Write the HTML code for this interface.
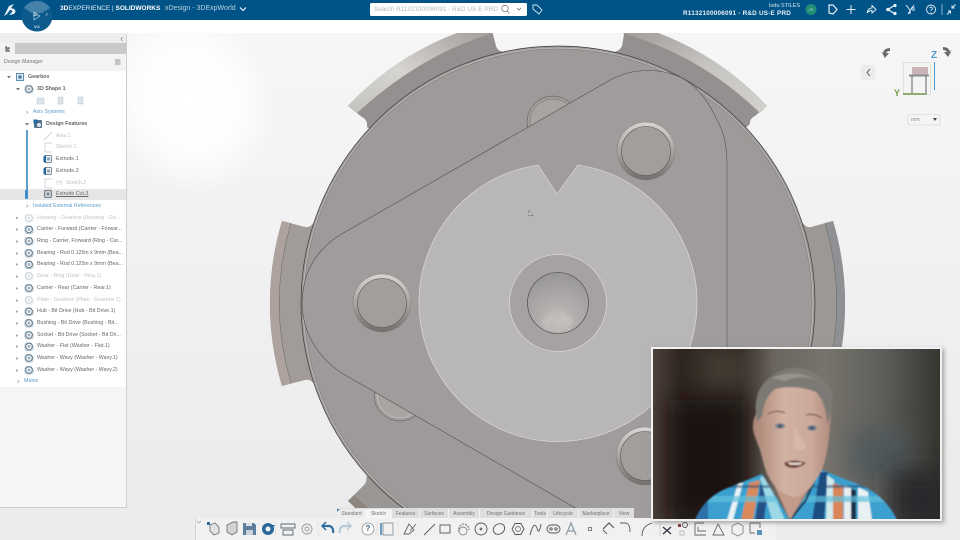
<!DOCTYPE html>
<html><head><meta charset="utf-8"><style>
html{background:#ececec}
html,body{margin:0;padding:0;width:960px;height:540px;overflow:hidden}
body{position:relative;font-family:"Liberation Sans",sans-serif;filter:blur(.3px)}
.a{position:absolute}
.t{position:absolute;white-space:nowrap;font-size:5.3px;line-height:8px;color:#62676b}
.d{color:#c2c2c2}.l{color:#5b9bc9}.b{font-weight:bold;color:#666}
.tb{position:absolute;top:509px;height:9px;font-size:5px;line-height:10px;text-align:center;color:#707070;background:#dedede;border-left:1px solid #f2f2f2}
svg{position:absolute;left:0;top:0;overflow:visible}
</style></head><body>

<div class="a" style="left:0;top:20px;width:960px;height:13px;background:#fff"></div>

<!-- viewport / gear -->
<svg width="960" height="540" viewBox="0 0 960 540">
<defs>
<radialGradient id="glow" cx="0.5" cy="0.5" r="0.5"><stop offset="0" stop-color="#fff"/><stop offset=".6" stop-color="#fff" stop-opacity=".8"/><stop offset="1" stop-color="#fff" stop-opacity="0"/></radialGradient>
<linearGradient id="strip" x1="0" y1="1" x2="1" y2="0"><stop offset="0" stop-color="#c4c2be"/><stop offset=".45" stop-color="#d6d4d0"/><stop offset="1" stop-color="#a39f9c"/></linearGradient>
<linearGradient id="strip2" x1="0" y1="0" x2="1" y2="1"><stop offset="0" stop-color="#a19d9a"/><stop offset=".5" stop-color="#c6c4c1"/><stop offset="1" stop-color="#d2d1ce"/></linearGradient>
<linearGradient id="ring" x1="0" y1="0" x2="0" y2="1"><stop offset="0" stop-color="#d8d6d4"/><stop offset=".5" stop-color="#a8a4a2"/><stop offset="1" stop-color="#726f6e"/></linearGradient>
<radialGradient id="hole" cx=".5" cy=".8" r=".8"><stop offset="0" stop-color="#c5c2c0"/><stop offset=".35" stop-color="#b3afae"/><stop offset="1" stop-color="#989696"/></radialGradient>
<linearGradient id="vg" x1="0" y1="0" x2="0" y2="1"><stop offset="0" stop-color="#f6f6f6"/><stop offset="1" stop-color="#ebebeb"/></linearGradient>
<filter id="sb" x="-50%" y="-50%" width="200%" height="200%"><feGaussianBlur stdDeviation="1.500"/></filter>
<clipPath id="vp"><rect x="127" y="33" width="833" height="485"/></clipPath>
</defs>
<rect x="127" y="33" width="833" height="485" fill="url(#vg)"/>
<ellipse cx="190" cy="100" rx="85" ry="95" fill="url(#glow)" transform="rotate(-30 190 100)"/>
<g clip-path="url(#vp)">
 <!-- tabs -->
 <path d="M348 106A288 288 0 0 1 490 23L496 46Q498 52 505 52L560 60L400 150L367 127Q368 120 362 117Z" fill="#949090"/>
 <path d="M348 106A288 288 0 0 1 457 33L493 33Q420 55 357 113Z" fill="url(#strip)"/>
 <path d="M626 23L622 46Q619 52 612 52L560 60L720 150L750 124Q749 119 755 116L767 106A288 288 0 0 0 626 23Z" fill="#949090"/>
 <path d="M658 33L622 33Q700 55 760 113L767 106A288 288 0 0 0 658 33Z" fill="url(#strip2)"/>
 <path d="M282 221A288 288 0 0 0 282 386L305 380Q310 379 313 383L340 303L313 223Q310 228 305 227Z" fill="#a19c99"/>
 <path d="M282 221A288 288 0 0 0 282 386L291 383A278 278 0 0 1 291 223Z" fill="#ada29e"/>
 <path d="M291 223A278 278 0 0 0 291 383" fill="none" stroke="#555" stroke-width=".4"/>
 <path d="M833 221A288 288 0 0 1 833 386L811 380Q806 379 803 383L780 303L803 223Q806 228 811 227Z" fill="#9c9896"/>
 <path d="M833 221A288 288 0 0 1 833 386L825 383A278 278 0 0 0 825 223Z" fill="#8e9093"/>
 <path d="M825 223A278 278 0 0 1 825 383" fill="none" stroke="#555" stroke-width=".4"/>
 <path d="M348 501L362 487Q368 482 366 476L420 500V530H385Z" fill="#9a9693"/>
 <path d="M348 501L354 495L392 530H378Z" fill="#8d8580"/>
 <!-- main disc -->
 <circle cx="558" cy="303" r="257" fill="#9c9897" stroke="#3e3d3d" stroke-width=".7"/>
 <circle cx="558" cy="303" r="255" fill="none" stroke="#d4d2d0" stroke-width=".5"/>
 <circle cx="558" cy="303" r="254" fill="#9e9a99" stroke="#6a6969" stroke-width=".3"/>
 <!-- partial holes -->
 <circle cx="553" cy="122" r="26" fill="#a09c9b" stroke="#555" stroke-width=".5"/>
 <circle cx="553" cy="122" r="23" fill="#a8a4a2" stroke="#666" stroke-width=".4"/>
 <circle cx="400" cy="395" r="26" fill="#a09c9b" stroke="#555" stroke-width=".5"/>
 <circle cx="400" cy="395" r="23" fill="#a8a4a2" stroke="#ddd" stroke-width=".5"/>
 <!-- plate -->
 <path d="M340 235L612 79Q643 64 675 75Q700 84 716 118Q727 136 727 165L727 540L610 528L340 372Q303 345 302 303Q303 258 340 235Z" fill="#a09c9b" stroke="#4c4b4e" stroke-width=".55"/>
 <!-- bolts -->
 <circle cx="646" cy="151" r="29" fill="url(#ring)" stroke="#777" stroke-width=".4"/><circle cx="646" cy="151" r="24.5" fill="#a29e9c" stroke="#555" stroke-width=".6"/>
 <circle cx="382" cy="303" r="29" fill="url(#ring)" stroke="#777" stroke-width=".4"/><circle cx="382" cy="303" r="24.5" fill="#a29e9c" stroke="#555" stroke-width=".6"/>
 <circle cx="645" cy="456" r="29" fill="url(#ring)" stroke="#777" stroke-width=".4"/><circle cx="645" cy="456" r="24.5" fill="#a29e9c" stroke="#555" stroke-width=".6"/>
 <!-- light disc with notch -->
 <path d="M538 165L557 194L578 165A139 139 0 1 1 538 165Z" fill="#b8b6b6" stroke="#e2e1e1" stroke-width=".6"/>
 <circle cx="558" cy="303" r="48.5" fill="#a6a2a1" stroke="#e2e1e1" stroke-width=".6"/>
 <circle cx="558" cy="303" r="30.5" fill="url(#hole)" stroke="#3f3e3e" stroke-width=".6"/>
 <path d="M547 329L555 312L541 322Z M567 329L560 312L574 320Z" fill="#c8c5c3" opacity=".65" filter="url(#sb)"/>
 <!-- cursor -->
 <path d="M529 210L529 216L531 215L533 216Z" fill="#ddd" stroke="#555" stroke-width=".5"/>
</g>
</svg>

<!-- top bar -->
<div class="a" style="left:0;top:0;width:960px;height:20px;background:#005386"></div>
<svg width="960" height="40" viewBox="0 0 960 40">
 <path d="M4 16L9 6L14 4L11 8L14 9Q17 11 14 14L9 15L12 12Q13 10 10 10L7 14Z" fill="#e8eff5"/>
 <circle cx="37" cy="16" r="15.500" fill="#0d5a8c"/>
 <path d="M24 8A15.500 15.500 0 0 1 50 8L42 13H32Z" fill="#5f91b6" opacity=".7"/>
 <path d="M34 12L40 16L34 20Z" fill="none" stroke="#b9d3e6" stroke-width=".7"/>
 <!-- search -->
 <rect x="370" y="3" width="157" height="13" rx="1.500" fill="#fff"/>
 <circle cx="505" cy="8.500" r="3.200" fill="none" stroke="#777" stroke-width=".8"/><path d="M507.300 11L509.500 13.500" stroke="#777" stroke-width=".8"/>
 <path d="M517 8L519 10L521 8" fill="none" stroke="#666" stroke-width=".8"/>
 <path d="M533 5L537 5L542 10L539 14L533 9Z" fill="none" stroke="#d5e5f0" stroke-width=".9"/>
 <!-- user -->
 <circle cx="811" cy="9.500" r="5.500" fill="#1f8f76"/>
 <path d="M829 5L833 5L837 9.500L833 14L829 13Z" fill="none" stroke="#e9f1f6" stroke-width="1.200"/>
 <path d="M851 5V14M846.500 9.500H855.500" stroke="#e9f1f6" stroke-width="1"/>
 <path d="M867 13Q868 8 872 8V5.500L876 9.500L872 13V10.500Q869 10.500 867 13Z" fill="none" stroke="#e9f1f6" stroke-width=".9"/>
 <path d="M895 5L888 9.500L895 14" fill="none" stroke="#e9f1f6" stroke-width="1.200"/><circle cx="888" cy="9.500" r="1.800" fill="#e9f1f6"/><circle cx="895" cy="5.500" r="1.600" fill="#e9f1f6"/><circle cx="895" cy="13.500" r="1.600" fill="#e9f1f6"/>
 <path d="M906 5L910 10V14M914 5L908 14M912 10H915M911 8H915" fill="none" stroke="#e9f1f6" stroke-width="1"/>
 <circle cx="931" cy="9.500" r="4.500" fill="none" stroke="#e9f1f6" stroke-width=".9"/><path d="M929.500 8Q931 6 932.500 8Q932.500 9.500 931 10V11M931 12V12.700" fill="none" stroke="#e9f1f6" stroke-width=".8"/>
 <path d="M942 4V15" stroke="#c5d8e5" stroke-width=".7"/>
 <path d="M947 14.500L950.500 11M950.500 13.500V11H948M955.500 4.500L952 8M952 5.500V8H954.500" fill="none" stroke="#e9f1f6" stroke-width="1"/>
 <path d="M240 7.500L243 10.500L246 7.500" fill="none" stroke="#fff" stroke-width="1"/>
</svg>
<div class="t" style="left:33px;top:13px;font-size:3.500px;color:#d5e3ee;font-weight:bold;line-height:5px">3D</div>
<div class="t" style="left:46px;top:13px;font-size:3.500px;color:#d5e3ee;line-height:5px">F</div>
<div class="t" style="left:34px;top:24px;font-size:4px;color:#dce8f1;font-weight:bold;line-height:5px">V.6</div>
<div class="t" style="left:60px;top:4px;font-size:6.500px;line-height:10px;color:#e3edf4"><b style="color:#fff">3D</b>EXPERIENCE | <b style="color:#fff">SOLIDWORKS</b></div>
<div class="t" style="left:165px;top:4px;font-size:7px;line-height:10px;color:#b9d2e3">xDesign - 3DExpWorld</div>
<div class="t" style="left:374px;top:5px;font-size:6.400px;line-height:9px;color:#b3b8bc">Search R1132100006091 - R&amp;D US-E PRD</div>
<div class="t" style="right:160px;top:2px;font-size:5.500px;line-height:8px;color:#dfe9f1">Iodu STILES</div>
<div class="t" style="left:683px;top:9px;font-size:6.300px;line-height:9px;color:#e8f0f5;font-weight:bold;letter-spacing:.25px">R1132100006091 - R&amp;D US-E PRD</div>
<div class="t" style="left:808.500px;top:6px;font-size:4px;line-height:7px;color:#bfe0d6">JS</div>

<!-- side panel -->
<div class="a" style="left:0;top:34px;width:126px;height:473px;background:#f5f5f5;border-right:1px solid #cfcfcf;border-bottom:1px solid #cfcfcf"></div>
<div class="a" style="left:0;top:34px;width:126px;height:9px;background:#eeeeee"></div>
<div class="a" style="left:0;top:43px;width:126px;height:11px;background:#c9c9c9"></div>
<div class="a" style="left:0;top:43px;width:15px;height:11px;background:#f2f2f2"></div>
<div class="a" style="left:0;top:54px;width:126px;height:17px;background:#f3f3f3"></div>
<div class="a" style="left:0;top:71px;width:126px;height:316px;background:#fff"></div>
<div class="a" style="left:0;top:189px;width:126px;height:11px;background:#e6e6e6"></div>
<div class="a" style="left:26px;top:130px;width:1.500px;height:64px;background:#5f9fce"></div>
<div class="a" style="left:25px;top:190px;width:3px;height:9px;background:#3e8fcb;border-radius:1px"></div>

<svg width="130" height="400" viewBox="0 0 130 400">
<defs>
<g id="p"><circle r="3.300" fill="none" stroke="#557489" stroke-width="1"/><circle r="1.500" fill="#9fb1bf"/><path d="M-3-3.500H2L4-1V3L2 4H-3L-4 2V-2Z" fill="none" stroke="#6d8a9f" stroke-width=".5"/></g>
<g id="pd" opacity=".32"><use href="#p"/></g>
<g id="ex"><rect x="-3.500" y="-3.500" width="7" height="7" rx="1" fill="#eef2f5" stroke="#53687a" stroke-width=".7"/><path d="M-4.500-2.500V3L-2 4V-3.500Z" fill="#20669e"/><rect x="-1" y="-1.500" width="3" height="3" fill="#8ba2b4"/></g>
</defs>
<path d="M122.500 37L121 39L122.500 41" fill="none" stroke="#8a8a8a" stroke-width=".7"/>
<path d="M6 46V51H10M6 48H10M8 51V48" fill="none" stroke="#444" stroke-width="1"/>
<path d="M115 60H120.500M115 62H120.500M115 64H120.500" stroke="#777" stroke-width=".8"/>
<g fill="#777"><path d="M7 76H11L9 78.500Z"/><path d="M16 88H20L18 90.500Z"/><path d="M25 123H29L27 125.500Z"/></g>
<g fill="none" stroke="#7da3c2" stroke-width=".6"><path d="M26.500 111L28 112.500L26.500 114"/><path d="M26.500 204.500L28 206L26.500 207.500"/><path d="M17.500 380L19 381.500L17.500 383"/></g>
<g fill="#aaa"><path d="M16 216.500L18.500 218L16 219.500Z"/><path d="M16 228L18.500 229.500L16 231Z"/><path d="M16 240L18.500 241.500L16 243Z"/><path d="M16 252L18.500 253.500L16 255Z"/><path d="M16 263L18.500 264.500L16 266Z"/><path d="M16 275L18.500 276.500L16 278Z"/><path d="M16 287L18.500 288.500L16 290Z"/><path d="M16 299L18.500 300.500L16 302Z"/><path d="M16 310L18.500 311.500L16 313Z"/><path d="M16 322L18.500 323.500L16 325Z"/><path d="M16 334L18.500 335.500L16 337Z"/><path d="M16 345L18.500 346.500L16 348Z"/><path d="M16 357L18.500 358.500L16 360Z"/><path d="M16 369L18.500 370.500L16 372Z"/></g>
<g fill="#dbe4ea" stroke="#2a6c9c" stroke-width=".7" transform="translate(20 77)"><path d="M-3.500-3.500H3.500V3.500H-3.500Z"/><circle r="1.300" fill="#4b82aa"/></g>
<use href="#p" x="29" y="89"/>
<g fill="#dde3e8" stroke="#bcc8d1" stroke-width=".5"><rect x="37" y="98" width="7" height="6"/><path d="M58 97H63V104H58Z"/><path d="M78 97H83V104H78Z"/></g>
<g transform="translate(38 124)"><rect x="-4" y="-4" width="8" height="8" rx="1" fill="#55708a"/><rect x="-4.500" y="-4.500" width="4" height="4" fill="#1e6aa3"/><circle cx="1" cy="1" r="2" fill="#dde4ea"/></g>
<path d="M44 140L52 132" stroke="#c4c4c4" stroke-width=".8"/>
<path d="M52 143H45V152H52" fill="none" stroke="#bfc8d0" stroke-width=".7"/>
<use href="#ex" x="48" y="159"/><use href="#ex" x="48" y="171"/>
<path d="M52 179H45V188H52" fill="none" stroke="#bfc8d0" stroke-width=".7"/>
<g transform="translate(48 194)"><rect x="-3.500" y="-3.500" width="7" height="7" rx="1" fill="#c9ced2" stroke="#566472" stroke-width=".8"/><rect x="-1.200" y="-1.200" width="2.400" height="2.400" fill="#6a7a88"/></g>
<use href="#pd" x="29" y="218"/><use href="#p" x="29" y="229.500"/><use href="#p" x="29" y="241"/><use href="#p" x="29" y="253"/><use href="#p" x="29" y="264.500"/><use href="#pd" x="29" y="276"/><use href="#p" x="29" y="288"/><use href="#pd" x="29" y="300"/><use href="#p" x="29" y="311.500"/><use href="#p" x="29" y="323"/><use href="#p" x="29" y="335"/><use href="#p" x="29" y="346.500"/><use href="#p" x="29" y="358"/><use href="#p" x="29" y="370"/>
</svg>

<div class="t" style="left:4px;top:58px;color:#777">Design Manager</div>
<div class="t b" style="left:28px;top:73px">Gearbox</div>
<div class="t b" style="left:37px;top:85px">3D Shape 1</div>
<div class="t l" style="left:33px;top:108px">Axis Systems</div>
<div class="t b" style="left:46px;top:120px">Design Features</div>
<div class="t d" style="left:56px;top:132px">Axis.1</div>
<div class="t d" style="left:56px;top:143px">Sketch.1</div>
<div class="t" style="left:56px;top:155px">Extrude.1</div>
<div class="t" style="left:56px;top:167px">Extrude.2</div>
<div class="t d" style="left:56px;top:179px">{=}&nbsp; Sketch.2</div>
<div class="t" style="left:56px;top:190px;text-decoration:underline">Extrude Cut.3</div>
<div class="t l" style="left:33px;top:202px">Isolated External References</div>
<div class="t d" style="left:37px;top:214px">Housing - Gearbox (Housing - Ge...</div>
<div class="t" style="left:37px;top:225px">Carrier - Forward (Carrier - Forwar...</div>
<div class="t" style="left:37px;top:237px">Ring - Carrier, Forward (Ring - Car...</div>
<div class="t" style="left:37px;top:249px">Bearing - Rod 0.125in x 9mm (Bea...</div>
<div class="t" style="left:37px;top:260px">Bearing - Rod 0.125in x 9mm (Bea...</div>
<div class="t d" style="left:37px;top:272px">Gear - Ring (Gear - Ring.1)</div>
<div class="t" style="left:37px;top:284px">Carrier - Rear (Carrier - Rear.1)</div>
<div class="t d" style="left:37px;top:296px">Plate - Gearbox (Plate - Gearbox.1)</div>
<div class="t" style="left:37px;top:307px">Hub - Bit Drive (Hub - Bit Drive.1)</div>
<div class="t" style="left:37px;top:319px">Bushing - Bit Drive (Bushing - Bit...</div>
<div class="t" style="left:37px;top:331px">Socket - Bit Drive (Socket - Bit Dri...</div>
<div class="t" style="left:37px;top:342px">Washer - Flat (Washer - Flat.1)</div>
<div class="t" style="left:37px;top:354px">Washer - Wavy (Washer - Wavy.1)</div>
<div class="t" style="left:37px;top:366px">Washer - Wavy (Washer - Wavy.2)</div>
<div class="t l" style="left:24px;top:377px">Mates</div>

<!-- view cube -->
<svg width="960" height="140" viewBox="0 0 960 140">
 <rect x="861" y="65" width="14" height="15" rx="2" fill="#ebebeb"/>
 <path d="M870 69L867 72.500L870 76" fill="none" stroke="#666" stroke-width="1"/>
 <path d="M890 48Q884 48 883 53L881 51L885 58L889 53L886 53Q887 51 890 51Z" fill="#6b6b6b"/>
 <path d="M943 47Q949 47 950 52L952 50L948 57L944 52L947 52Q946 50 943 50Z" fill="#6b6b6b"/>
 <rect x="903.500" y="62.500" width="27" height="32" fill="#f4f4f4" stroke="#d4d4d4" stroke-width=".6"/>
 <rect x="912" y="67" width="16" height="8" fill="#c9b4b8"/>
 <rect x="909" y="74.500" width="20" height="2" fill="#8d8d8d"/>
 <path d="M912 76V93M926 76V93" stroke="#5c6066" stroke-width="1"/>
 <path d="M903 94H927" stroke="#6e9a4a" stroke-width="1.400"/>
 <path d="M934.500 62V90" stroke="#4a9ad2" stroke-width="1"/>
 <rect x="908" y="114.500" width="32" height="10.500" rx="1.500" fill="#f5f5f5" stroke="#cfcfcf" stroke-width=".6"/>
 <path d="M933 118H937L935 121Z" fill="#444"/>
</svg>
<div class="t" style="left:931px;top:50px;font-size:10px;line-height:11px;color:#4d9bd0;font-weight:bold">Z</div>
<div class="t" style="left:894px;top:88px;font-size:9px;line-height:11px;color:#6f9c42;font-weight:bold">Y</div>
<div class="t" style="left:911px;top:116px;color:#888">mm</div>

<!-- toolbar -->
<div class="a" style="left:195px;top:518px;width:580px;height:22px;background:#f1f1f1;border-left:1px solid #d5d5d5"></div>
<div class="a" style="left:337px;top:508px;width:297px;height:10px;background:#dedede"></div>
<div class="tb" style="left:337px;width:27px;background:#ececec">Standard</div>
<div class="tb" style="left:365px;width:25px;background:#f4f4f4">Sketch</div>
<div class="tb" style="left:391px;width:27px">Features</div>
<div class="tb" style="left:419px;width:28px">Surfaces</div>
<div class="tb" style="left:448px;width:30px">Assembly</div>
<div class="tb" style="left:479px;width:52px">Design Guidance</div>
<div class="tb" style="left:532px;width:14px">Tools</div>
<div class="tb" style="left:547px;width:30px">Lifecycle</div>
<div class="tb" style="left:578px;width:34px">Marketplace</div>
<div class="tb" style="left:613px;width:20px">View</div>

<svg width="960" height="540" viewBox="0 0 960 540">
 <path d="M337 509H340L337 512Z" fill="#3f86bb"/>
 <path d="M197 521L199 523L201 521" fill="none" stroke="#999" stroke-width=".7"/>
 <rect x="207" y="522" width="3" height="3" fill="#2a6c9c"/>
 <g fill="none" stroke="#777" stroke-width=".9">
  <path d="M210 525L215 523L219 527V533L214 535L210 531Z" fill="#dfe3e6"/>
  <path d="M227 525L233 522H237V532L232 535L227 532Z" fill="#cfd3d6"/>
  <path d="M281 524H295V528H281ZM283 530H293V535H283Z" stroke="#5a6872"/>
  <circle cx="307" cy="529" r="5" stroke="#9a9a9a"/><circle cx="307" cy="529" r="2" stroke="#9a9a9a"/>
  <path d="M383 523H393V535H383Z" stroke="#8a9aa8"/><path d="M381 523V535" stroke="#1f6ea8" stroke-width="1.300"/>
  <path d="M404 534L409 524L414 530L409 534ZM416 524L410 531" stroke="#666"/>
  <path d="M424 535L435 524" stroke="#555"/>
  <rect x="440" y="525" width="10" height="8" stroke="#555"/>
  <path d="M459 532A6 6 0 0 1 463 524A6 6 0 0 1 469 530" stroke="#666" stroke-dasharray="2 1"/><circle cx="463" cy="531" r="4" stroke="#888"/>
  <circle cx="481" cy="529" r="6" stroke="#555"/><circle cx="481" cy="529" r="1" fill="#555"/>
  <ellipse cx="499" cy="529" rx="6" ry="5" transform="rotate(-35 499 529)" stroke="#555"/>
  <path d="M512 529L515 523.500H521L524 529L521 534.500H515Z" stroke="#555"/><circle cx="518" cy="529" r="2.500" stroke="#777"/>
  <path d="M530 535Q534 520 537 528Q539 536 541 524" stroke="#555"/>
  <rect x="547" y="525" width="13" height="8" rx="4" stroke="#555"/><circle cx="551" cy="529" r="1.200" stroke="#555"/><circle cx="556" cy="529" r="1.200" stroke="#555"/>
  <path d="M566 535L571 523L576 535M568.500 531H574" stroke="#99a6b0" stroke-width="1.500"/>
  <rect x="588.500" y="527.500" width="3" height="3" stroke="#777"/>
  <path d="M603 529L609 523L614 528" stroke="#555" stroke-width="1.200"/><path d="M603 530L607 534" stroke="#555"/>
  <path d="M620 523H626Q630 524 630 532" stroke="#555"/>
  <path d="M642 536Q642 526 652 523" stroke="#555"/>
  <path d="M660 522V536" stroke="#ccc"/>
  <path d="M663 527L671 534M671 527L663 534" stroke="#334" stroke-width="1.300"/>
  <rect x="678" y="524" width="3" height="3" fill="#8c3a3a" stroke="none"/><circle cx="685" cy="525" r="2.500" stroke="#555"/><path d="M680 531H684V535H680Z" stroke="#bbb"/>
  <path d="M704 523H695V535H706M698 527V531H706" stroke="#666"/>
  <path d="M713 535L718 524L724 535Z" stroke="#666"/>
  <path d="M732 526L738 523L743 526V533L738 536L732 533Z" stroke="#888"/>
  <path d="M750 523H760V528M750 523V533H755" stroke="#666"/>
 </g>
 <rect x="757" y="530" width="5" height="5" fill="#5a92bb"/>
 <path d="M243 523H254L256 525V535H243Z" fill="#5d7f9e"/><rect x="246" y="530" width="7" height="5" fill="#c8d1d8"/><rect x="246" y="523" width="6" height="3" fill="#dbe2e7"/>
 <circle cx="268" cy="529" r="6" fill="#27679a"/><circle cx="268" cy="529" r="2.500" fill="#eef2f5"/>
 <path d="M272 525L275 525L272 529Z" fill="#27679a"/>
 <path d="M323 526H330Q334 528 333 533" fill="none" stroke="#2f6ea1" stroke-width="2.200"/><path d="M326 522L322 526L326 530" fill="none" stroke="#2f6ea1" stroke-width="1.500"/>
 <path d="M350 526H343Q339 528 340 533" fill="none" stroke="#b9c9d5" stroke-width="2.200"/><path d="M347 522L351 526L347 530" fill="none" stroke="#b9c9d5" stroke-width="1.500"/>
 <circle cx="368" cy="529" r="6" fill="#fafafa" stroke="#8a8a8a" stroke-width=".7"/>
 <path d="M275.500 521V536M318 521V536M377 521V536M398 521V536" stroke="#dcdcdc" stroke-width=".6"/>
</svg>
<div class="t" style="left:365.500px;top:524px;font-size:8px;line-height:10px;color:#3f6f94;font-weight:bold">?</div>

<!-- video -->
<div class="a" style="left:651px;top:347px;width:287px;height:170px;border:2px solid #f2f2f2;box-shadow:2px 2px 4px rgba(90,90,90,.5);overflow:hidden;background:#33302c">
<svg width="287" height="170" viewBox="653 349 287 170" style="left:0;top:0">
<defs>
<linearGradient id="bg" x1="0" y1="0" x2="1" y2="0"><stop offset="0" stop-color="#4c413a"/><stop offset=".1" stop-color="#2f251f"/><stop offset=".3" stop-color="#2f261f"/><stop offset=".42" stop-color="#6b665f"/><stop offset=".6" stop-color="#77746d"/><stop offset=".8" stop-color="#5f5e5a"/><stop offset="1" stop-color="#35342f"/></linearGradient>
<linearGradient id="face" x1="0" y1="0" x2="1" y2="0"><stop offset="0" stop-color="#a98373"/><stop offset=".4" stop-color="#d2b2a3"/><stop offset=".75" stop-color="#cba99a"/><stop offset="1" stop-color="#b08c7d"/></linearGradient>
<filter id="b6" x="-100%" y="-100%" width="300%" height="300%"><feGaussianBlur stdDeviation="12"/></filter>
<filter id="b05" x="-10%" y="-10%" width="120%" height="120%"><feGaussianBlur stdDeviation=".7"/></filter>
<clipPath id="shirt"><path d="M695 520Q705 496 730 487L762 474L790 520L822 470L860 485Q885 495 897 520Z"/></clipPath>
</defs>
<rect x="653" y="349" width="287" height="170" fill="url(#bg)"/>
<rect x="670" y="400" width="75" height="120" fill="#140e0b" opacity=".8" filter="url(#b6)"/>
<rect x="700" y="349" width="50" height="40" fill="#5a5348" opacity=".5" filter="url(#b6)"/>
<rect x="850" y="430" width="60" height="50" fill="#4a575b" opacity=".7" filter="url(#b6)"/>
<rect x="890" y="470" width="60" height="60" fill="#26282a" opacity=".9" filter="url(#b6)"/>
<g filter="url(#b05)">
 <!-- neck -->
 <path d="M765 465L790 520L822 465Z" fill="#c39b88"/>
 <!-- head -->
 <path d="M757 412Q756 392 770 380Q795 366 820 380Q834 394 830 425Q828 458 820 474Q806 498 792 497Q772 490 765 468L760 450L755 437Q750 424 757 412Z" fill="url(#face)"/>
 <!-- hair -->
 <path d="M757 422Q752 396 765 382Q782 366 800 368Q820 370 832 392Q834 410 827 424Q826 402 816 392Q795 384 775 389Q764 398 762 416Z" fill="#7d7a74"/>
 <path d="M772 378Q795 368 817 380Q800 374 785 381Z" fill="#96948c"/>
 <!-- brows/eyes -->
 <path d="M768 414Q776 409 785 413M806 415Q814 413 822 418" fill="none" stroke="#8b6a58" stroke-width="1.500"/>
 <ellipse cx="780" cy="426" rx="5" ry="2.600" fill="#6f7e90"/><ellipse cx="812" cy="428" rx="5" ry="2.600" fill="#6f7e90"/>
 <circle cx="780" cy="426" r="1.500" fill="#3c4654"/><circle cx="812" cy="428" r="1.500" fill="#3c4654"/>
 <path d="M795 428Q792 445 796 449Q804 452 806 446" fill="#dcbcac" opacity=".7"/>
 <path d="M784 463Q794 458 806 463Q796 471 786 466Z" fill="#6d3a33"/>
 <path d="M787 462.500H803L800 465H790Z" fill="#ddd0c8"/>
 <!-- shirt -->
 <g clip-path="url(#shirt)">
  <rect x="690" y="465" width="210" height="60" fill="#3aa0cf"/>
  <rect x="690" y="465" width="18" height="60" fill="#2d6fa8"/>
  <path d="M727 520L738 483L743 483L733 520Z" fill="#e9f3f5"/>
  <path d="M741 520L749 483L760 480L753 520Z" fill="#d9895a"/>
  <path d="M755 520L762 478L770 476L764 520Z" fill="#274f86"/>
  <path d="M765 475L785 520H772L760 478Z" fill="#9cd8e6"/>
  <path d="M812 520L820 472L828 472L824 520Z" fill="#1f4d80"/>
  <path d="M826 520L827 475L834 480L836 520Z" fill="#cfe9ec"/>
  <path d="M833 520V483L843 486V520Z" fill="#d98558"/>
  <path d="M844 520V485L851 488V520Z" fill="#e7eef0"/>
  <path d="M851 520V489L856 490V520Z" fill="#1c2e47"/>
  <path d="M858 520V487L868 492L872 520Z" fill="#e8f2f4"/>
  <rect x="690" y="496" width="210" height="6" fill="#63c0dd" opacity=".7"/>
  <rect x="690" y="485" width="210" height="3" fill="#244a78" opacity=".5"/>
  <path d="M790 520L784 500L776 480L768 470" fill="none" stroke="#14283f" stroke-width="2"/>
  <path d="M790 520L806 500L818 472" fill="none" stroke="#14283f" stroke-width="2"/>
 </g>
</g>
</svg>
</div>
</body></html>
